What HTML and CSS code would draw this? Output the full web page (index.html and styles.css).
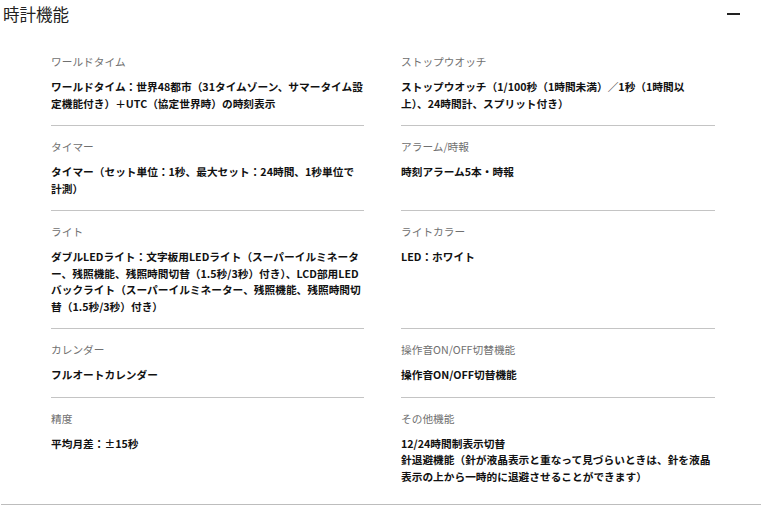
FILE: index.html
```html
<!DOCTYPE html>
<html lang="ja">
<head>
<meta charset="utf-8">
<link rel="stylesheet" href="styles.css">
</head>
<body>
<section class="spec">
  <header class="spec-head">
    <h2 class="spec-title">時計機能</h2>
    <span class="toggle" aria-label="閉じる"></span>
  </header>
  <div class="spec-grid">
    <div class="item">
      <div class="label">ワールドタイム</div>
      <div class="value">ワールドタイム：世界48都市（31タイムゾーン、サマータイム設<br>定機能付き）＋UTC（協定世界時）の時刻表示</div>
    </div>
    <div class="item">
      <div class="label">ストップウオッチ</div>
      <div class="value">ストップウオッチ（1/100秒（1時間未満）／1秒（1時間以<br>上）、24時間計、スプリット付き）</div>
    </div>
    <div class="item">
      <div class="label">タイマー</div>
      <div class="value">タイマー（セット単位：1秒、最大セット：24時間、1秒単位で<br>計測）</div>
    </div>
    <div class="item">
      <div class="label">アラーム/時報</div>
      <div class="value">時刻アラーム5本・時報</div>
    </div>
    <div class="item">
      <div class="label">ライト</div>
      <div class="value">ダブルLEDライト：文字板用LEDライト（スーパーイルミネータ<br>ー、残照機能、残照時間切替（1.5秒/3秒）付き）、LCD部用LED<br>バックライト（スーパーイルミネーター、残照機能、残照時間切<br>替（1.5秒/3秒）付き）</div>
    </div>
    <div class="item">
      <div class="label">ライトカラー</div>
      <div class="value">LED：ホワイト</div>
    </div>
    <div class="item">
      <div class="label">カレンダー</div>
      <div class="value">フルオートカレンダー</div>
    </div>
    <div class="item">
      <div class="label">操作音ON/OFF切替機能</div>
      <div class="value">操作音ON/OFF切替機能</div>
    </div>
    <div class="item last">
      <div class="label">精度</div>
      <div class="value">平均月差：±15秒</div>
    </div>
    <div class="item last">
      <div class="label">その他機能</div>
      <div class="value">12/24時間制表示切替<br>針退避機能（針が液晶表示と重なって見づらいときは、針を液晶<br>表示の上から一時的に退避させることができます）</div>
    </div>
  </div>
</section>
</body>
</html>
```

FILE: styles.css
```css
html, body {
  margin: 0;
  padding: 0;
  background: #ffffff;
}

body {
  font-family: "Noto Sans CJK JP", "Noto Sans", sans-serif;
  color: #111111;
  width: 764px;
  height: 507px;
  overflow: hidden;
}

.spec {
  width: 760px;
  margin-left: 1px;
  border-bottom: 1px solid #bdbdbd;
}

.spec-head {
  height: 41px;
  display: flex;
  align-items: flex-start;
  justify-content: space-between;
}

.spec-title {
  margin: 3px 0 0 2px;
  font-size: 16.5px;
  line-height: 22px;
  font-weight: 400;
  color: #222222;
}

.toggle {
  display: block;
  width: 13px;
  height: 2px;
  background: #222222;
  margin: 13px 21px 0 0;
}

.spec-grid {
  display: grid;
  grid-template-columns: 313px 314px;
  column-gap: 37px;
  padding-left: 50px;
  padding-bottom: 6px;
}

.item {
  padding: 13px 0 13px;
  border-bottom: 1px solid #c4c4c4;
}

.item.last {
  border-bottom: none;
}

.label {
  font-size: 10.7px;
  line-height: 16px;
  color: #707070;
  margin-bottom: 9px;
}

.value {
  font-size: 10.7px;
  line-height: 16.5px;
  font-weight: 700;
  color: #111111;
}
```
